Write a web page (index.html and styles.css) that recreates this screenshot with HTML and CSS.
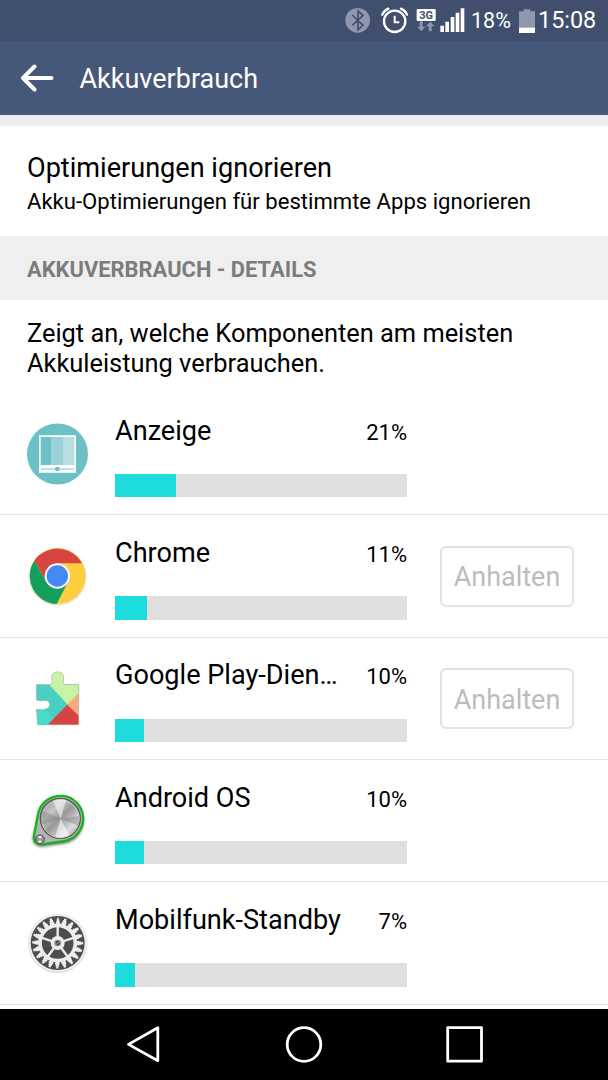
FILE: index.html
```html
<!DOCTYPE html>
<html lang="de">

<head>
    <meta charset="UTF-8">
    <meta name="viewport" content="width=device-width, initial-scale=1.0">
    <title>Akkuverbrauch</title>
    <link rel="stylesheet" href="styles.css">
</head>

<body>

    <div class="statusbar">
        <svg class="status-icons" width="126" height="41" viewBox="0 0 378 123">
            <!-- Bluetooth -->
            <circle cx="38" cy="61" r="37" fill="#8e97ad" />
            <path d="M22 45l32 31-15 13V33l15 13-32 30" fill="none" stroke="#414f6f" stroke-width="5" />
            <!-- Alarm -->
            <g fill="none" stroke="#fff">
                <circle cx="149" cy="64" r="32" stroke-width="7" />
                <path d="M149 47v20h14" stroke-width="6" />
                <path d="M112 44q5-12 18-18M186 44q-5-12-18-18" stroke-width="7" stroke-linecap="round" />
            </g>
            <!-- 3G -->
            <rect x="215" y="27" width="57" height="36" rx="3" fill="#fff" />
            <text class="net-label" x="243.5" y="56">3G</text>
            <path d="M224 64h9v16h8L229 94 217 80h7zM251 94h9V79h8L256 65 243 79h8z" fill="#8e97ad" />
            <!-- Signal -->
            <path d="M286 77h11v19h-11zM301 65h11v31h-11zM317 51h11v45h-11zM332 38h11v58h-11zM347 25h11v71h-11z"
                fill="#fff" />
        </svg>
        <span class="battery-percent">18%</span>
        <svg class="battery" width="16" height="24" viewBox="0 0 48 72">
            <path d="M14 1h20v6h14v65H0V7h14z" fill="#8e97ad" />
            <path d="M0 56h48v16H0z" fill="#fff" />
        </svg>
        <span class="clock">15:08</span>
    </div>

    <header>
        <svg class="back" width="34" height="28" viewBox="0 0 34 28">
            <path d="M31.500 14H3M14.500 2.500L3 14l11.500 11.500" fill="none" stroke="#fff" stroke-width="4"
                stroke-linecap="round" stroke-linejoin="round" />
        </svg>
        <h1>Akkuverbrauch</h1>
    </header>

    <div class="optimize">
        <div class="optimize-title">Optimierungen ignorieren</div>
        <div class="optimize-text">Akku-Optimierungen für bestimmte Apps ignorieren</div>
    </div>

    <h2>AKKUVERBRAUCH - DETAILS</h2>

    <div class="hint">Zeigt an, welche Komponenten am meisten Akkuleistung verbrauchen.</div>

    <div class="list">
        <div class="item">
            <svg class="icon" viewBox="36 39 186 186">
                <circle cx="127.500" cy="132" r="91.500" fill="#6cc1c7" />
                <path d="M72 76h111v112H72z" fill="#fff" />
                <path d="M77 81h33v84H77z" fill="#6cc1c7" />
                <path d="M110 81h34v84h-34z" fill="#9ad2d7" />
                <path d="M144 81h34v84h-34z" fill="#b7dfe2" />
                <path d="M77 177h101" stroke="#a5d8dc" stroke-width="4" />
                <circle cx="127" cy="177" r="7" fill="#6cc1c7" />
            </svg>
            <div class="usage">
                <div class="usage-head"><span class="name">Anzeige</span><span class="percent">21%</span></div>
                <div class="bar"><div class="fill" style="width: 21%"></div></div>
            </div>
        </div>

        <div class="item">
            <svg class="icon" viewBox="36 31 186 186">
                <circle cx="128" cy="127" r="86" fill="#e4e4e4" />
                <circle cx="128" cy="124" r="84" fill="#ffcd40" />
                <path d="M127 86h74A84 84 0 0 0 58 78l36 62z" fill="#d64541" />
                <path d="M58 78l35 61 34 23 29-14-31 60A84 84 0 0 1 58 78z" fill="#14a05c" />
                <circle cx="127" cy="124" r="38" fill="#f4f6f8" />
                <circle cx="127" cy="124" r="32" fill="#4688f4" />
            </svg>
            <div class="usage">
                <div class="usage-head"><span class="name">Chrome</span><span class="percent">11%</span></div>
                <div class="bar"><div class="fill" style="width: 11%"></div></div>
            </div>
            <button class="stop" disabled>Anhalten</button>
        </div>

        <div class="item">
            <svg class="icon" viewBox="36 38 186 186">
                <defs>
                    <clipPath id="puzzle">
                        <path d="M65 88h40q9 0 7-10-7-28 16-28t16 28q-2 10 7 10h40v120H68l-3-46q17 4 26 0 14-3 13-15-2-14-17-12-8 3-22-1z" />
                    </clipPath>
                </defs>
                <path d="M65 88h40q9 0 7-10-7-28 16-28t16 28q-2 10 7 10h40v120H68l-3-46q17 4 26 0 14-3 13-15-2-14-17-12-8 3-22-1z"
                    fill="#999" stroke="#aaa" stroke-width="3" />
                <g clip-path="url(#puzzle)">
                    <path d="M60 40h140v170H60z" fill="#c6f3a4" />
                    <path d="M60 88h43l55 60-61 62H60z" fill="#4bcfc5" />
                    <path d="M60 165h35l20 25-18 20H60z" fill="#4adbc8" />
                    <path d="M191 114v72l-34-38z" fill="#fba77c" />
                    <path d="M157 148l38 37v25H96z" fill="#d44444" />
                </g>
            </svg>
            <div class="usage">
                <div class="usage-head"><span class="name">Google Play-Dien…</span><span class="percent">10%</span></div>
                <div class="bar"><div class="fill" style="width: 10%"></div></div>
            </div>
            <button class="stop" disabled>Anhalten</button>
        </div>

        <div class="item">
            <svg class="icon" viewBox="36 30 186 186">
                <defs>
                    <linearGradient id="metal" x1="0" y1="0" x2="1" y2="1">
                        <stop offset="0" stop-color="#888" />
                        <stop offset=".3" stop-color="#c5c5c5" />
                        <stop offset=".5" stop-color="#999" />
                        <stop offset=".75" stop-color="#ddd" />
                        <stop offset="1" stop-color="#888" />
                    </linearGradient>
                    <filter id="soft" x="-20%" y="-20%" width="140%" height="140%">
                        <feGaussianBlur stdDeviation="4" />
                    </filter>
                </defs>
                <path d="M70 103A69 69 0 1 1 152 190L80 200Q50 198 54 170z" fill="#666" filter="url(#soft)" />
                <path d="M70 98A68.500 68.500 0 1 1 150 183L80 193Q54 192 57 168z" fill="#b4b4b4" stroke="#16b51b"
                    stroke-width="7" stroke-linejoin="round" />
                <circle cx="136" cy="115" r="60" fill="url(#metal)" stroke="#555" stroke-width="4" />
                <circle cx="136" cy="117" r="56" fill="none" stroke="#ddd" stroke-width="2" />
                <path d="M137 116L82 92q-8 20-3 42zM137 116l56-8v31z" fill="#666" opacity=".3" />
                <path d="M137 116L114 63q20-9 39-2zM137 116l-16 55q23 6 42-5z" fill="#fff" opacity=".55" />
                <circle cx="75" cy="178" r="13" fill="#999" stroke="#444" stroke-width="3" />
                <path d="M75 177l-7-9h14zM75 179l-7 9h14z" fill="#eee" />
            </svg>
            <div class="usage">
                <div class="usage-head"><span class="name">Android OS</span><span class="percent">10%</span></div>
                <div class="bar"><div class="fill" style="width: 10%"></div></div>
            </div>
        </div>

        <div class="item">
            <svg class="icon" viewBox="36 37 186 186">
                <circle cx="128" cy="131" r="89" fill="#dedede" />
                <circle cx="128" cy="129" r="87" fill="#efefef" />
                <circle cx="128" cy="130" r="81" fill="#4d4d4d" />
                <g fill="none" stroke="#eee" transform="rotate(-90 128 130)">
                    <!-- 20 teeth, wide at the root and narrow at the tip -->
                    <circle cx="128" cy="130" r="61" stroke-width="8" pathLength="200" stroke-dasharray="7 3"
                        stroke-dashoffset="3.500" />
                    <circle cx="128" cy="130" r="67" stroke-width="8" pathLength="200" stroke-dasharray="5 5"
                        stroke-dashoffset="2.500" />
                    <circle cx="128" cy="130" r="73" stroke-width="7" pathLength="200" stroke-dasharray="3 7"
                        stroke-dashoffset="1.500" />
                    <circle cx="128" cy="130" r="53" stroke-width="11" />
                    <path d="M128 130h50M128 130l15.500 47.600M128 130l-40.500 29.400M128 130l-40.500-29.400M128 130l15.500-47.600"
                        stroke-width="7" />
                </g>
                <circle cx="128" cy="130" r="21" fill="#eee" />
                <circle cx="128" cy="130" r="10" fill="#8a8a8a" />
                <circle cx="128" cy="130" r="6" fill="#333" />
                <path d="M124 134l8-8" stroke="#ccc" stroke-width="3" />
            </svg>
            <div class="usage">
                <div class="usage-head"><span class="name">Mobilfunk-Standby</span><span class="percent">7%</span></div>
                <div class="bar"><div class="fill" style="width: 7%"></div></div>
            </div>
        </div>
    </div>

    <nav>
        <svg width="608" height="71" viewBox="0 0 608 71">
            <g fill="none" stroke="#fff" stroke-width="2.800" stroke-linejoin="round">
                <path d="M157.800 18.700v33L128.500 35.400z" />
                <circle cx="304" cy="35.500" r="16.800" />
                <path d="M447.700 18.700h33.800v33.500h-33.800z" />
            </g>
        </svg>
    </nav>

</body>

</html>
```
FILE: styles.css
```css
/* Global Styling */
* {
    box-sizing: border-box;
}

body {
    display: flex;
    flex-direction: column;
    width: 608px;
    height: 1080px;
    margin: 0;
    overflow: hidden;
    font-family: Roboto, sans-serif;
    background-color: #fff;
    color: #000;
}

svg {
    display: block;
    flex-shrink: 0;
}

/* Status Bar */
.statusbar {
    display: flex;
    align-items: center;
    justify-content: flex-end;
    height: 41px;
    padding-right: 12px;
    background-color: #414f6f;
    color: #fff;
}

.net-label {
    font-size: 33px;
    font-weight: bold;
    text-anchor: middle;
    fill: #414f6f;
}

.battery-percent {
    width: 48px;
    font-size: 21.5px;
    line-height: 43px;
}

.battery {
    margin-right: 3px;
}

.clock {
    width: 58px;
    font-size: 23.4px;
    line-height: 43px;
}

/* Header */
header {
    display: flex;
    align-items: center;
    height: 74px;
    padding-left: 20px;
    background-color: #465879;
    color: #fff;
}

header h1 {
    margin: 2px 0 0 25.5px;
    font-size: 27px;
    font-weight: normal;
}

/* Optimierungen */
.optimize {
    height: 121px;
    padding: 26px 27px 0;
    border-top: 11px solid #eee;
}

.optimize-title {
    font-size: 27.1px;
    line-height: 33px;
}

.optimize-text {
    font-size: 22.1px;
    line-height: 32px;
}

h2 {
    height: 64px;
    margin: 0;
    padding-left: 27px;
    background-color: #efefef;
    color: #7c7c7c;
    font-size: 21.9px;
    line-height: 67px;
}

.hint {
    height: 93.2px;
    padding: 18px 27px 0;
    font-size: 25.4px;
    line-height: 30px;
}

/* App-Liste */
.list {
    height: 615.8px;
    overflow: hidden;
}

.item {
    display: flex;
    height: 122.3px;
    padding-left: 27px;
    border-bottom: 1px solid #e3e3e3;
}

.icon {
    width: 62px;
    height: 62px;
    margin: 30px 26px 0 0;
}

.usage {
    width: 292px;
    padding-top: 21.5px;
}

.usage-head {
    display: flex;
    align-items: baseline;
    justify-content: space-between;
    height: 59.5px;
    line-height: 32px;
}

.name {
    white-space: nowrap;
    font-size: 27.1px;
}

.percent {
    font-size: 22px;
}

.bar {
    height: 23.3px;
    background-color: #dfdfdf;
}

.fill {
    height: 100%;
    background-color: #1edcdb;
}

.stop {
    width: 134px;
    height: 61px;
    margin: 30.5px 0 0 33px;
    padding: 2px 0 0;
    border: 2px solid #e2e2e2;
    border-radius: 6px;
    background-color: #fff;
    color: #bcbcbc;
    font-family: inherit;
    font-size: 27px;
}

/* Navigation */
nav {
    height: 71px;
    background-color: #000;
}
```
